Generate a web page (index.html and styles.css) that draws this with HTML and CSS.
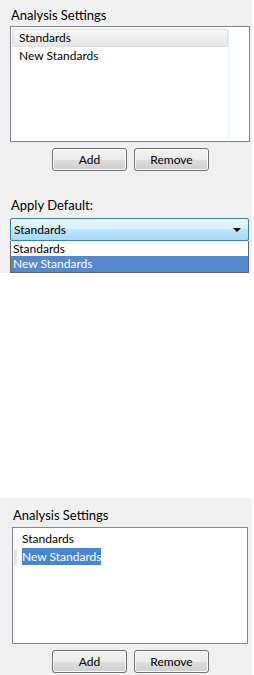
FILE: index.html
```html
<!DOCTYPE html>
<html lang="en">

<head>
    <meta charset="UTF-8">
    <title>Analysis Settings</title>
    <link rel="stylesheet" href="styles.css">
</head>

<body>
    <div class="panel panel-top">
        <div class="label">Analysis Settings</div>
        <div class="listbox">
            <div class="list-inner">
                <div class="item hover">Standards</div>
                <div class="item">New Standards</div>
            </div>
        </div>
        <div class="buttons">
            <button class="btn">Add</button>
            <button class="btn">Remove</button>
        </div>

        <div class="label apply-label">Apply Default:</div>
        <div class="combo">
            <span>Standards</span>
            <span class="arrow"></span>
        </div>
        <div class="dropdown">
            <div class="drop-item">Standards</div>
            <div class="drop-item selected">New Standards</div>
        </div>
    </div>

    <div class="panel panel-bottom">
        <div class="label">Analysis Settings</div>
        <div class="listbox">
            <div class="list-inner">
                <div class="item">Standards</div>
                <div class="item editing"><span class="sel-text">New Standards</span></div>
            </div>
        </div>
        <div class="buttons">
            <button class="btn">Add</button>
            <button class="btn">Remove</button>
        </div>
    </div>
</body>

</html>
```

FILE: styles.css
```css
body {
    margin: 0;
    background-color: #fff;
    font-family: Lato, "Noto Sans", sans-serif;
    font-size: 12px;
    color: #000;
}

.panel {
    width: 252px;
    background-color: #f0f0f0;
    box-sizing: border-box;
    display: flex;
    flex-direction: column;
}

.panel-top {
    height: 273px;
    padding: 7px 2px 0 10px;
}

.panel-bottom {
    margin-top: 225px;
    height: 177px;
    padding: 9px 4px 0 12px;
}

.label {
    height: 16px;
    line-height: 16px;
    padding-left: 1px;
    font-size: 13px;
}

.listbox {
    margin-top: 3px;
    height: 116px;
    background-color: #fff;
    border: 1px solid #828790;
    box-sizing: border-box;
    padding: 2px 1px;
}

.panel-bottom .listbox {
    margin-top: 4px;
    height: 117px;
}

.list-inner {
    width: 217px;
    height: 100%;
    border-right: 1px solid #e3eef9;
    box-sizing: border-box;
}

.item {
    height: 18px;
    line-height: 16px;
    padding-left: 6px;
    border: 1px solid transparent;
    border-radius: 2px;
    box-sizing: border-box;
}

.item.hover {
    border-color: #dcdcdc;
    background: linear-gradient(#f6f6f6, #e8e8e8);
}

.panel-bottom .list-inner {
    border-right-color: transparent;
}

.panel-bottom .item {
    padding-left: 7px;
}

.item.editing {
    border-left: 3px solid #e4e4e4;
    padding-left: 5px;
}

.sel-text {
    background-color: #4a86d0;
    color: #fff;
    padding: 1px 0;
}

.buttons {
    display: flex;
    justify-content: center;
    gap: 7px;
    margin-top: 6px;
    padding-left: 1px;
}

.btn {
    width: 75px;
    height: 23px;
    font-family: inherit;
    font-size: 12px;
    color: #000;
    border: 1px solid #707070;
    border-radius: 3px;
    background: linear-gradient(#f2f2f2 0%, #ebebeb 50%, #dddddd 51%, #cfcfcf 100%);
    box-shadow: inset 0 0 0 1px #fcfcfc;
    padding: 0;
}

.apply-label {
    margin-top: 26px;
}

.combo {
    margin-top: 5px;
    width: 239px;
    height: 23px;
    box-sizing: border-box;
    border: 1px solid #3c7fb1;
    border-radius: 2px;
    background: linear-gradient(#eaf6fd 0%, #d9f0fc 45%, #bee6fd 50%, #a7d9f5 100%);
    display: flex;
    align-items: center;
    justify-content: space-between;
    padding: 0 7px 0 3px;
}

.arrow {
    width: 0;
    height: 0;
    border-left: 4px solid transparent;
    border-right: 4px solid transparent;
    border-top: 4px solid #000;
}

.dropdown {
    width: 239px;
    box-sizing: border-box;
    border: 1px solid #646464;
    border-top: none;
    background-color: #fff;
}

.drop-item {
    height: 15px;
    line-height: 15px;
    padding-left: 2px;
}

.drop-item.selected {
    height: 16px;
    background-color: #5689cb;
    color: #fff;
}
```
